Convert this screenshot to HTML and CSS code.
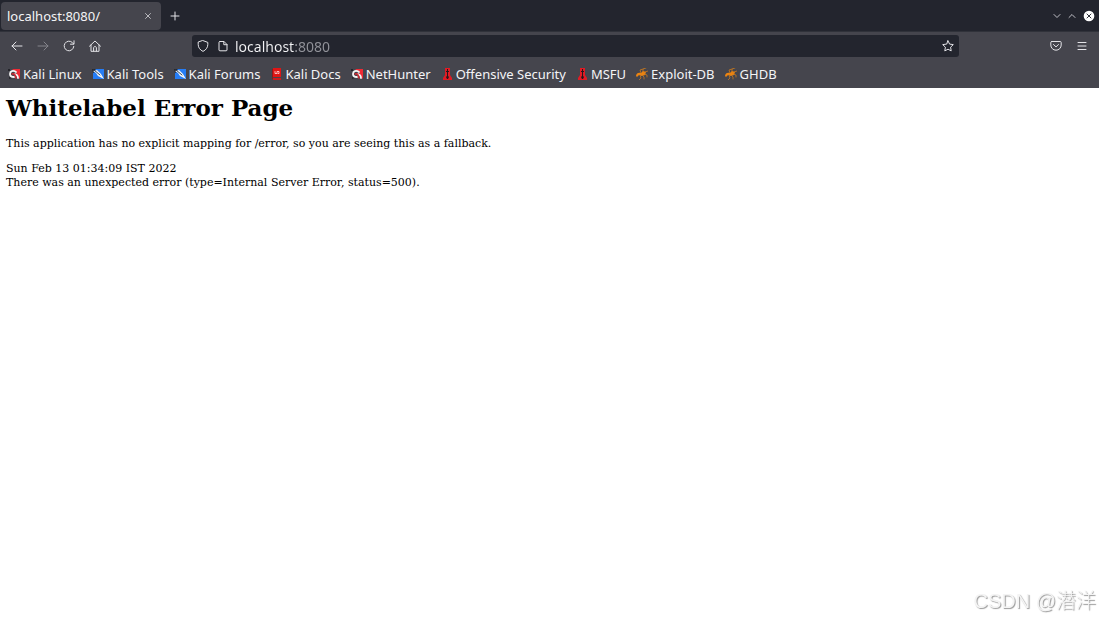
FILE: index.html
```html
<!DOCTYPE html>
<html lang="en">
<head>
    <meta charset="UTF-8">
    <meta name="viewport" content="width=device-width, initial-scale=1.0">
    <title>localhost:8080/</title>
    <link rel="stylesheet" href="styles.css">
</head>
<body>

    <!-- Shared bookmark icons -->
    <svg class="symbols" aria-hidden="true">
        <symbol id="kali" viewBox="0 0 12 12">
            <path fill="#ef2b35" d="M4 1h8v10L9 8 8 4z"/>
            <path fill="#24242a" d="M0 1h2v2H0zM1 9l3 1-3 1z"/>
            <path fill="none" stroke="#f5f5f5" stroke-width="1.800" d="M8 4C5 2 2 3 2 6s2 3 4 3M7 6q3 1 3 4"/>
            <path fill="none" stroke="#d02932" stroke-width="1.500" d="M4 6c2-1 3 0 4 4"/>
        </symbol>
        <symbol id="tools" viewBox="0 0 12 12">
            <path fill="#267df5" d="M1 1h11v10H1z"/>
            <path fill="#25272d" d="M0 1h3l2 2-4 2z"/>
            <path fill="#f4f6f8" d="M1 3l4-1 4 4 3 5-6-3-2-3z"/>
            <path fill="none" stroke="#30445d" d="M2 2l6 5"/>
        </symbol>
        <symbol id="docs" viewBox="0 0 12 12">
            <path fill="#df1515" d="M3 0h8v9H3z"/>
            <path fill="#8d171b" d="M2 1h1v10H2z"/>
            <path fill="#cc1a1d" d="M3 10h8v2H3z"/>
            <path fill="none" stroke="#ffdada" stroke-width=".8" d="M5 3.500v2h2v-2h2v2H8"/>
        </symbol>
        <symbol id="offsec" viewBox="0 0 12 12">
            <path fill="#e01b24" d="M4 0h5v7l2 3v2H2v-2l2-3z"/>
            <path fill="#24171b" d="M6 1h1v2h1v1H7v4l1 1-1 2H6L5 9l1-1V4H5V3h1z"/>
        </symbol>
        <symbol id="bug" viewBox="0 0 12 12">
            <path fill="#ed8410" d="M0 8c0-3 3-4 5-3l2-2 3 1-1 3-3 1-3-1-2 2z"/>
            <path fill="none" stroke="#c77920" stroke-width=".8" d="M5 5L4 2l3-1M7 4L7 1l3-1M9 4l3-1M8 6l3 1v2M6 7l2 2v2M4 7l1 3-2 2"/>
        </symbol>
    </svg>

    <header class="browser">
        <div class="tab-bar">
            <div class="tab">
                <span class="tab-title">localhost:8080/</span>
                <button class="icon-button tab-close" type="button" aria-label="Close tab">
                    <svg width="6" height="6" viewBox="0 0 6 6"><path d="M.5.5l5 5M5.5.5l-5 5"/></svg>
                </button>
            </div>
            <button class="icon-button new-tab" type="button" aria-label="New tab">
                <svg width="10" height="10" viewBox="0 0 10 10"><path d="M5 1v8M1 5h8"/></svg>
            </button>
            <div class="window-buttons">
                <button class="icon-button" type="button" aria-label="Minimize">
                    <svg width="8" height="8" viewBox="0 0 8 8"><path d="M1 2.5l3 3 3-3"/></svg>
                </button>
                <button class="icon-button" type="button" aria-label="Maximize">
                    <svg width="8" height="8" viewBox="0 0 8 8"><path d="M1 5.5l3-3 3 3"/></svg>
                </button>
                <button class="icon-button" type="button" aria-label="Close window">
                    <svg width="12" height="12" viewBox="0 0 12 12"><circle cx="6" cy="6" r="5.3" fill="#fff" stroke="none"/><path stroke="#30333c" d="M4 4l4 4M8 4L4 8"/></svg>
                </button>
            </div>
        </div>

        <div class="nav-bar">
            <div class="nav-buttons">
                <button class="icon-button" type="button" aria-label="Back">
                    <svg width="12" height="12" viewBox="0 0 12 12"><path d="M11 6H1M5 2L1 6l4 4"/></svg>
                </button>
                <button class="icon-button" type="button" aria-label="Forward" disabled>
                    <svg width="12" height="12" viewBox="0 0 12 12"><path d="M1 6h10M7 2l4 4-4 4"/></svg>
                </button>
                <button class="icon-button" type="button" aria-label="Reload">
                    <svg width="12" height="12" viewBox="0 0 12 12"><path d="M10.8 6.4A4.8 4.8 0 1 1 9.5 2.7l1 1M11 .8v3.4H7.5"/></svg>
                </button>
                <button class="icon-button" type="button" aria-label="Home">
                    <svg width="12" height="12" viewBox="0 0 12 12"><path d="M.5 6.2L6 1l5.500 5.200M2 5v6.300h8V5M4.600 11V8c0-2 2.800-2 2.800 0v3"/></svg>
                </button>
            </div>
            <div class="url-bar">
                <svg width="12" height="12" viewBox="0 0 12 12"><path d="M6 .6l4.800 1.800v2.200c0 3-2 5.500-4.800 6.800C3.200 10.100 1.200 7.600 1.200 4.600V2.400z"/></svg>
                <svg class="page-icon" width="12" height="12" viewBox="0 0 12 12"><path d="M3 1.500h4l3 3V10q0 .8-1 .8H3q-1 0-1-.8V2.300q0-.8 1-.8zM6.800 1.500v3.200H10"/></svg>
                <input class="url" type="text" value="localhost:8080" aria-label="Address">
                <button class="icon-button" type="button" aria-label="Bookmark this page">
                    <svg width="12" height="12" viewBox="0 0 12 12"><path d="M6 .8l1.600 3.300 3.700.5-2.700 2.600.6 3.700L6 9.200l-3.200 1.700.6-3.700L.7 4.600l3.700-.5z"/></svg>
                </button>
            </div>
            <div class="menu-buttons">
                <button class="icon-button" type="button" aria-label="Save to Pocket">
                    <svg width="12" height="12" viewBox="0 0 12 12"><path d="M1.800 1.500h8.400q1 0 1 1V5a5.200 5.200 0 0 1-10.400 0V2.500q0-1 1-1zM3.500 4.500L6 6.900l2.500-2.400"/></svg>
                </button>
                <button class="icon-button" type="button" aria-label="Menu">
                    <svg width="10" height="10" viewBox="0 0 10 10"><path d="M1 1.500h8M1 5h8M1 8.500h8"/></svg>
                </button>
            </div>
        </div>

        <nav class="bookmarks">
            <a href="#"><svg><use href="#kali"/></svg>Kali Linux</a>
            <a href="#"><svg><use href="#tools"/></svg>Kali Tools</a>
            <a href="#"><svg><use href="#tools"/></svg>Kali Forums</a>
            <a href="#"><svg><use href="#docs"/></svg>Kali Docs</a>
            <a href="#"><svg><use href="#kali"/></svg>NetHunter</a>
            <a href="#"><svg><use href="#offsec"/></svg>Offensive Security</a>
            <a href="#"><svg><use href="#offsec"/></svg>MSFU</a>
            <a href="#"><svg><use href="#bug"/></svg>Exploit-DB</a>
            <a href="#"><svg><use href="#bug"/></svg>GHDB</a>
        </nav>
    </header>

    <main class="page">
        <h1>Whitelabel Error Page</h1>
        <p>This application has no explicit mapping for /error, so you are seeing this as a fallback.</p>
        <div>Sun Feb 13 01:34:09 IST 2022</div>
        <div>There was an unexpected error (type=Internal Server Error, status=500).</div>
    </main>

    <div class="watermark">CSDN @潜洋</div>

</body>
</html>
```

FILE: styles.css
```css
* {
    box-sizing: border-box;
}
body {
    margin: 0;
    background-color: #fff;
    color: #000;
    font-family: "DejaVu Serif", serif;
    font-size: 11px;
}
.symbols {
    position: absolute;
    width: 0;
    height: 0;
}
.browser {
    background-color: #45454d;
    color: #f4f4f6;
    font-family: "Noto Sans", sans-serif;
    font-size: 13px;
}
.browser svg {
    display: block;
    flex: none;
    fill: none;
    stroke: currentColor;
    stroke-linecap: round;
    stroke-linejoin: round;
}
.icon-button {
    display: flex;
    align-items: center;
    justify-content: center;
    padding: 0;
    border: 0;
    background: none;
    color: #e4e4e8;
}
.icon-button:disabled {
    color: #85858c;
}
.tab-bar {
    display: flex;
    align-items: center;
    height: 32px;
    padding: 0 4px 0 1px;
    background-color: #23252e;
    border-bottom: 1px solid #30323a;
}
.tab {
    display: flex;
    align-items: center;
    justify-content: space-between;
    width: 160px;
    height: 28px;
    padding: 0 10px 0 6px;
    border-radius: 4px;
    background-color: #45454d;
}
.tab-close {
    color: #b8b8bd;
}
.new-tab {
    margin-left: 9px;
}
.window-buttons {
    display: flex;
    align-items: center;
    gap: 7px;
    margin-left: auto;
}
.window-buttons .icon-button {
    color: #c0c0c6;
}
.nav-bar {
    display: flex;
    align-items: center;
    height: 28px;
    padding: 0 12px 0 11px;
}
.nav-buttons {
    display: flex;
    gap: 14px;
}
.url-bar {
    display: flex;
    align-items: center;
    flex: 1;
    height: 22px;
    margin: 0 91px;
    padding: 0 5px;
    border-radius: 3px;
    background-color: #23252e;
    color: #e4e4e8;
}
.page-icon {
    margin-left: 8px;
}
/* host part is bright, port is dimmed */
.url {
    flex: 1;
    min-width: 0;
    margin-left: 6px;
    padding: 0;
    border: 0;
    outline: 0;
    background: linear-gradient(to right, #f4f4f6 60px, #92939a 60px);
    -webkit-background-clip: text;
    background-clip: text;
    color: transparent;
    font: inherit;
    font-size: 14px;
}
.menu-buttons {
    display: flex;
    align-items: center;
    gap: 15px;
}
.bookmarks {
    display: flex;
    align-items: center;
    gap: 10px;
    height: 28px;
    padding: 0 8px;
}
.bookmarks a {
    display: flex;
    align-items: center;
    gap: 3px;
    color: inherit;
    text-decoration: none;
    white-space: nowrap;
}
.bookmarks svg {
    width: 12px;
    height: 12px;
    stroke: none;
}
.page {
    padding: 6px;
    line-height: 14px;
}
.page h1 {
    margin: 0 0 15px;
    font-size: 23px;
    line-height: 28px;
}
.page p {
    margin: 0 0 11px;
}
.watermark {
    position: fixed;
    right: 3px;
    bottom: 4px;
    color: #f4f4f4;
    font-family: "Liberation Sans", "Noto Sans CJK SC", sans-serif;
    font-size: 20px;
    font-weight: 300;
    line-height: 26px;
    text-shadow: 1px 1px 1px #999;
}
```
